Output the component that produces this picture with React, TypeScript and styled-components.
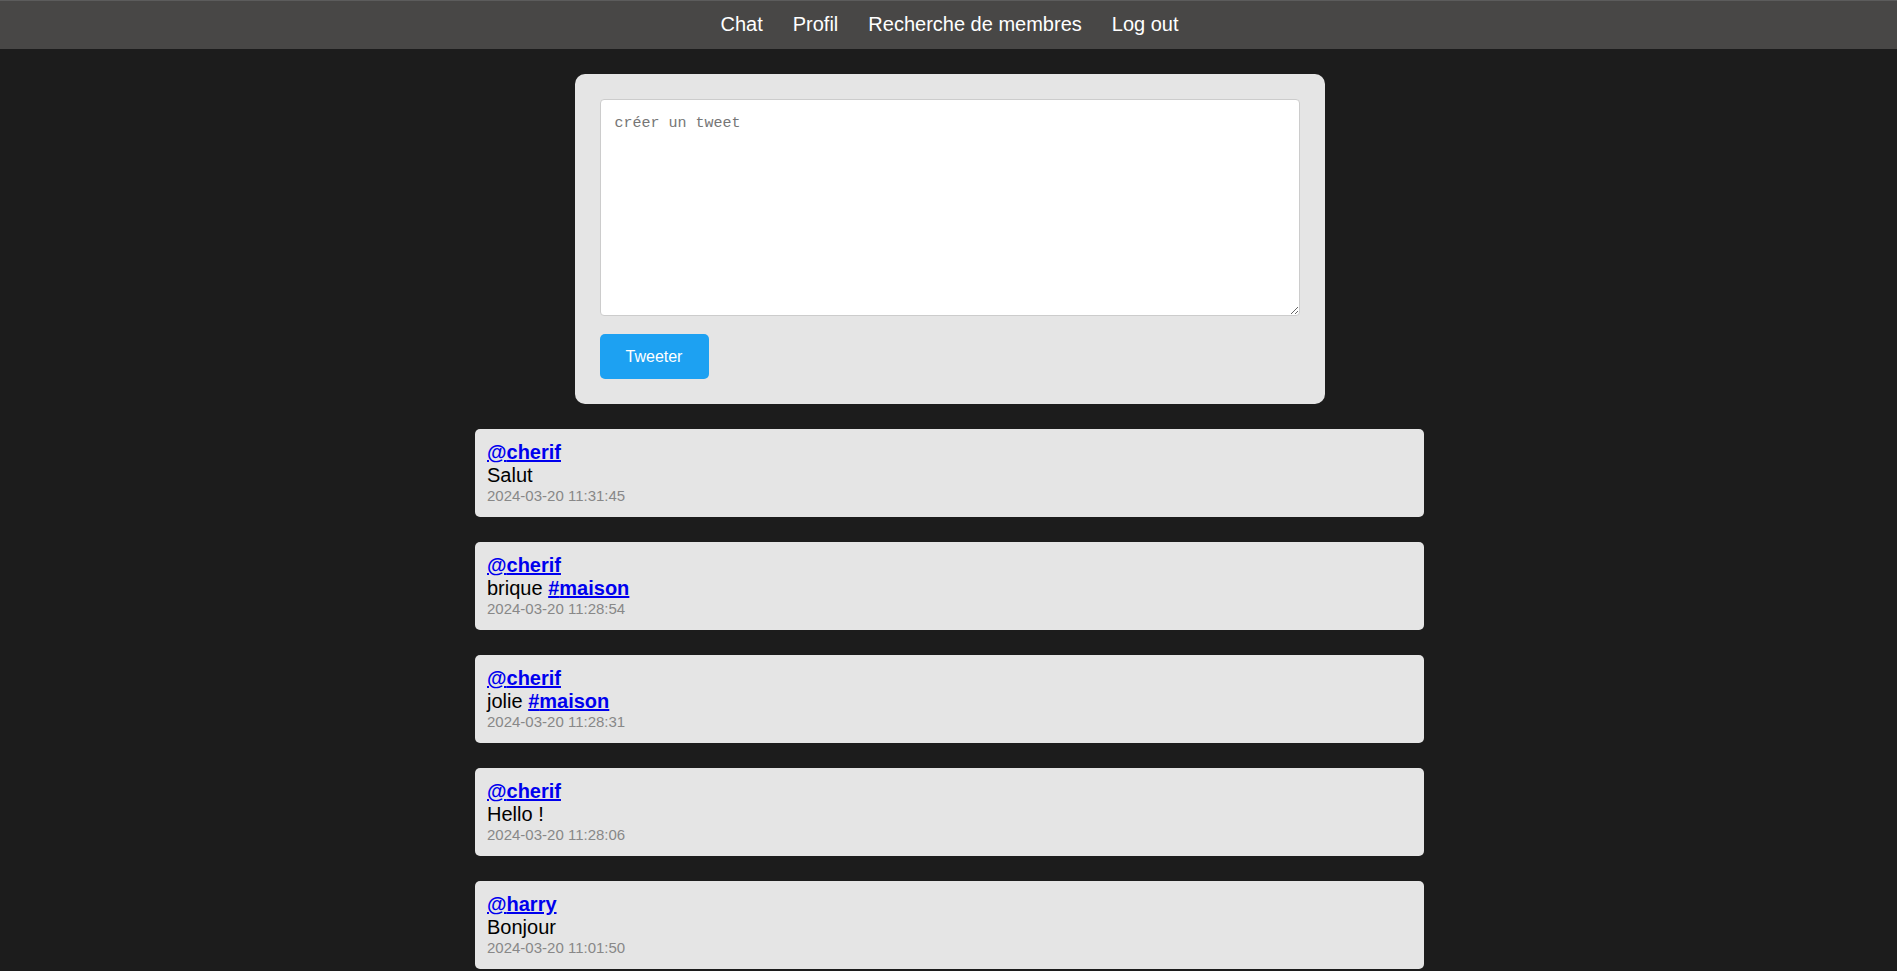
import React from "react";
import styled, { createGlobalStyle } from "styled-components";

const GlobalStyle = createGlobalStyle`
  html, body {
    margin: 0;
    padding: 0;
    background: #1c1c1c;
    font-family: "Liberation Sans", Arial, sans-serif;
  }
  * { box-sizing: border-box; }
`;

const Page = styled.div`
  min-height: 971px;
  background: #1c1c1c;
  display: flex;
  flex-direction: column;
`;

const NavBar = styled.nav`
  background: #484746;
  border-top: 1px solid #5c5c5c;
  padding: 12px 0 13px 2px;
  display: flex;
  justify-content: center;
  gap: 30px;
`;

const NavLink = styled.a`
  color: #ffffff;
  font-size: 20px;
  line-height: 23px;
  text-decoration: none;
  cursor: pointer;
`;

const Main = styled.main`
  display: flex;
  flex-direction: column;
  align-items: center;
  padding: 25px 0 0 2px;
  gap: 25px;
`;

const Composer = styled.form`
  width: 750px;
  background: #e5e5e5;
  border-radius: 10px;
  padding: 25px;
  display: flex;
  flex-direction: column;
  align-items: flex-start;
  gap: 18px;
`;

const TweetInput = styled.textarea`
  width: 700px;
  height: 217px;
  border: 1px solid #cccccc;
  border-radius: 4px;
  background: #ffffff;
  padding: 15px 12px 12px 14px;
  font-family: "Liberation Mono", "DejaVu Sans Mono", monospace;
  font-size: 15px;
  line-height: 18px;
  color: #222;
  resize: vertical;
  outline: none;
  &::placeholder {
    color: #767676;
  }
`;

const TweetButton = styled.button`
  width: 109px;
  height: 45px;
  background: #1da1f2;
  color: #ffffff;
  border: none;
  border-radius: 5px;
  font-family: "Liberation Sans", Arial, sans-serif;
  font-size: 16px;
  cursor: pointer;
`;

const Feed = styled.section`
  width: 949px;
  display: flex;
  flex-direction: column;
  gap: 25px;
`;

const TweetCard = styled.article`
  background: #e5e5e5;
  border-radius: 5px;
  padding: 12px 12px 12px;
  display: flex;
  flex-direction: column;
`;

const Author = styled.a`
  color: #0000ee;
  font-weight: bold;
  font-size: 20px;
  line-height: 23px;
  text-decoration: underline;
  align-self: flex-start;
  cursor: pointer;
`;

const Body = styled.p`
  margin: 0;
  color: #000000;
  font-size: 20px;
  line-height: 23px;
`;

const Hashtag = styled.a`
  color: #0000ee;
  font-weight: bold;
  text-decoration: underline;
  cursor: pointer;
`;

const Stamp = styled.span`
  color: #888888;
  font-size: 15px;
  line-height: 18px;
`;

type Tweet = {
  author: string;
  text: string;
  tag?: string;
  date: string;
};

const tweets: Tweet[] = [
  { author: "cherif", text: "Salut", date: "2024-03-20 11:31:45" },
  { author: "cherif", text: "brique", tag: "maison", date: "2024-03-20 11:28:54" },
  { author: "cherif", text: "jolie", tag: "maison", date: "2024-03-20 11:28:31" },
  { author: "cherif", text: "Hello !", date: "2024-03-20 11:28:06" },
  { author: "harry", text: "Bonjour", date: "2024-03-20 11:01:50" },
];

export default function App() {
  return (
    <Page>
      <GlobalStyle />
      <NavBar>
        <NavLink>Chat</NavLink>
        <NavLink>Profil</NavLink>
        <NavLink>Recherche de membres</NavLink>
        <NavLink>Log out</NavLink>
      </NavBar>
      <Main>
        <Composer onSubmit={(e) => e.preventDefault()}>
          <TweetInput placeholder="créer un tweet" />
          <TweetButton type="submit">Tweeter</TweetButton>
        </Composer>
        <Feed>
          {tweets.map((t, i) => (
            <TweetCard key={i}>
              <Author>@{t.author}</Author>
              <Body>
                {t.text}
                {t.tag && (
                  <>
                    {" "}
                    <Hashtag>#{t.tag}</Hashtag>
                  </>
                )}
              </Body>
              <Stamp>{t.date}</Stamp>
            </TweetCard>
          ))}
        </Feed>
      </Main>
    </Page>
  );
}
